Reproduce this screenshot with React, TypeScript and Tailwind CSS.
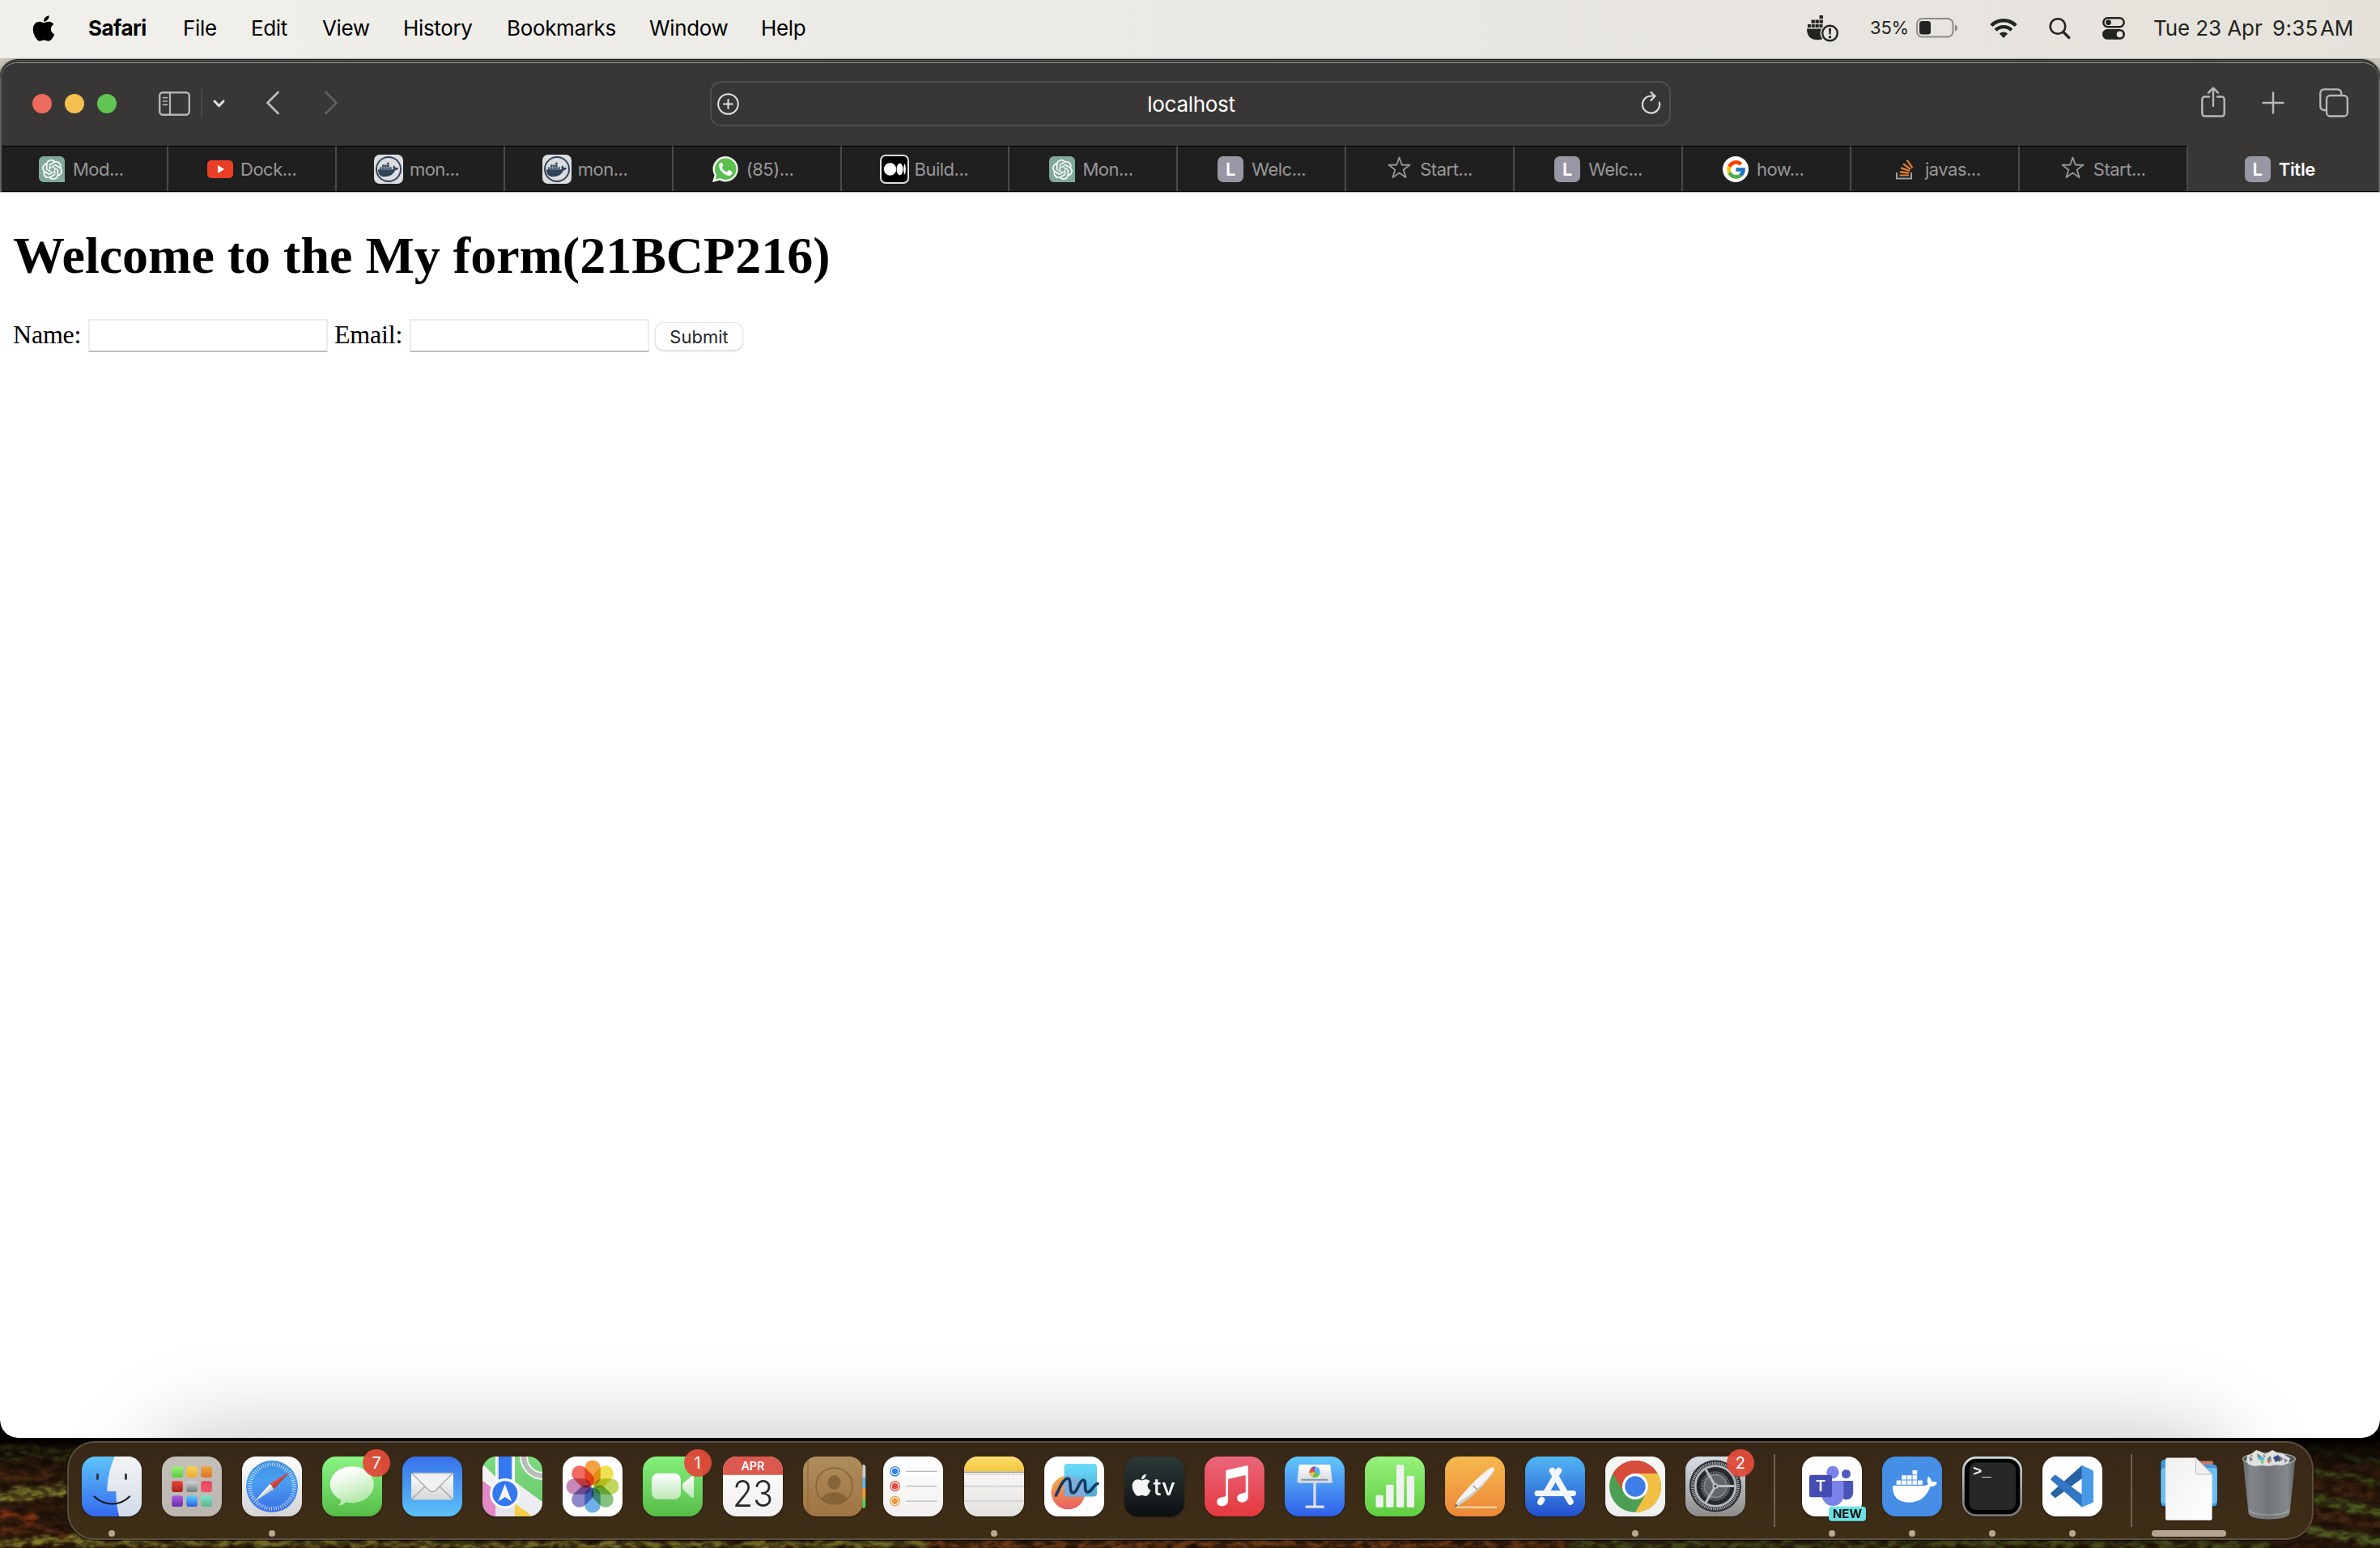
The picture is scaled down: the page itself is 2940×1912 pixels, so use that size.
import React from "react";
import { FaApple, FaDocker } from "react-icons/fa";
import { FcGoogle } from "react-icons/fc";
import { SiOpenai } from "react-icons/si";

/* ---------- Menu bar ---------- */

const menus = [
  { label: "File", cls: "w-[84px]" },
  { label: "Edit", cls: "w-[88px]" },
  { label: "View", cls: "w-[100px]" },
  { label: "History", cls: "w-[128px]" },
  { label: "Bookmarks", cls: "w-[176px]" },
  { label: "Window", cls: "w-[138px]" },
  { label: "Help", cls: "w-[60px]" },
];

function DockerStatus() {
  return (
    <svg className="h-[34px] w-[40px]" viewBox="0 0 40 34" fill="#232321">
      <path d="M15.500 1h4.500v4h-4.500zM5.500 6.500h4.300v4.200H5.500zM10.500 6.500h4.300v4.200h-4.300zM15.500 6.500h4.500v4.200h-4.500zM1 12h4v4H1zM5.800 12h4v4h-4zM10.500 12h4.300v4h-4.300zM15.500 12h4v4h-4z" />
      <path d="M0 17.500h18c-2.500 5-1.500 9.500 1.500 12.500-3 1.300-6 1.500-9 1C3.500 30.500 0 25 0 17.500z" />
      <circle cx="28.500" cy="23" r="9.300" fill="none" stroke="#232321" strokeWidth="2.400" />
      <path d="M27 17h3l-.5 7.500h-2z" />
      <circle cx="28.500" cy="27.700" r="1.700" />
    </svg>
  );
}

function Battery() {
  return (
    <svg className="h-[25px] w-[52px]" viewBox="0 0 52 25">
      <rect x="1" y="1" width="44.500" height="22.500" rx="6.500" fill="none" stroke="#8c8b87" strokeWidth="2" />
      <rect x="4" y="4" width="14" height="16.500" rx="3.500" fill="#232321" />
      <path d="M48 8.500c2 .6 3 2 3 4s-1 3.400-3 4z" fill="#8c8b87" />
    </svg>
  );
}

function Wifi() {
  return (
    <svg className="h-[26px] w-[34px]" viewBox="0 0 34 26" fill="none" stroke="#232321">
      <path d="M1.800 9.500a21.500 21.500 0 0 1 30.400 0" strokeWidth="4.400" />
      <path d="M7.200 15.200a13.900 13.900 0 0 1 19.600 0" strokeWidth="4.200" />
      <path d="M17 25l-5.200-5.400a7.300 7.300 0 0 1 10.400 0z" fill="#232321" stroke="none" />
    </svg>
  );
}

function ControlCentre() {
  return (
    <svg className="h-[28px] w-[28px]" viewBox="0 0 28 28">
      <rect x="1.300" y="1.300" width="25.400" height="11" rx="5.500" fill="none" stroke="#232321" strokeWidth="2.500" />
      <circle cx="7.500" cy="6.800" r="3.300" fill="#232321" />
      <rect x="0" y="15" width="28" height="12.800" rx="6.400" fill="#232321" />
      <circle cx="21.500" cy="21.400" r="3.800" fill="#e6e4de" />
    </svg>
  );
}

function MenuBar() {
  return (
    <header className="flex h-[72px] items-center bg-linear-to-r from-[#f1f0eb] to-[#e5e2dc] pt-[1px] pb-[4px] pl-[40px] text-[26px] whitespace-nowrap text-black">
      <FaApple className="mr-[41px] h-[36px] w-[28px]" />
      <span className="w-[117px] font-bold tracking-[-0.5px]">Safari</span>
      {menus.map((m) => (
        <span key={m.label} className={`${m.cls} tracking-[-0.35px]`}>
          {m.label}
        </span>
      ))}
      <div className="ml-auto flex items-center pr-[33px] text-[#232321]">
        <DockerStatus />
        <span className="ml-[38px] w-[57px] text-[22px] tracking-[-0.2px]">35%</span>
        <Battery />
        <span className="ml-[39px] flex">
          <Wifi />
        </span>
        <svg className="ml-[39px] h-[28px] w-[27px]" viewBox="0 0 27 28" fill="none" stroke="#232321">
          <circle cx="11" cy="11.500" r="9.300" strokeWidth="2.600" />
          <path d="M17.800 18.500l7 7" strokeWidth="3.200" strokeLinecap="round" />
        </svg>
        <span className="ml-[39px] flex">
          <ControlCentre />
        </span>
        <span className="ml-[35px] w-[147px] tracking-[-0.1px]">Tue 23 Apr</span>
        <span className="w-[59px] tracking-[0.3px]">9:35</span>
        <span className="w-[41px] tracking-[-0.3px]">AM</span>
      </div>
    </header>
  );
}

/* ---------- Safari toolbar and tabs ---------- */

function Toolbar() {
  return (
    <div className="grid h-[102px] grid-cols-[874px_1188px_1fr] items-center bg-[#393735] pb-[2px]">
      <div className="flex items-center pl-[38px]">
        <div className="flex gap-4">
          <span className="size-6 rounded-full bg-[#ed6a5f]" />
          <span className="size-6 rounded-full bg-[#f5bf4f]" />
          <span className="size-6 rounded-full bg-[#61c554]" />
        </div>
        <svg className="-mt-[1px] ml-[52px] h-[30px] w-[39px]" viewBox="0 0 39 30" fill="none" stroke="#b6b5b3">
          <rect x="1.200" y="1.200" width="36.600" height="27.600" rx="4" strokeWidth="2.400" />
          <path d="M14 1v28" strokeWidth="2.200" />
          <path d="M5.500 7.700h4.800M5.500 12h4.800M5.500 16.300h4.800" strokeWidth="1.700" strokeLinecap="round" />
        </svg>
        <span className="ml-[13px] h-[36px] w-[2px] bg-[#4a4947]" />
        <svg className="-mt-[1px] ml-[13px] h-[10px] w-[15px]" viewBox="0 0 15 10" fill="none" stroke="#e2e1e0">
          <path d="M2 2l5.500 5.700L13 2" strokeWidth="3" strokeLinecap="round" strokeLinejoin="round" />
        </svg>
        <svg className="-mt-[3px] ml-[50px] h-[30px] w-[18px]" viewBox="0 0 18 30" fill="none" stroke="#bdbcba">
          <path d="M15.500 2L2.500 15l13 13" strokeWidth="2.700" strokeLinecap="round" strokeLinejoin="round" />
        </svg>
        <svg className="-mt-[3px] ml-[54px] h-[30px] w-[18px]" viewBox="0 0 18 30" fill="none" stroke="#5f5e5c">
          <path d="M2.500 2l13 13-13 13" strokeWidth="2.700" strokeLinecap="round" strokeLinejoin="round" />
        </svg>
      </div>
      <div className="ml-[1px] flex h-[56px] items-center justify-between rounded-[14px] border-2 border-[#4f4e4c] pr-[10px] pl-[7px]">
        <svg className="size-[27px]" viewBox="0 0 27 27" fill="none" stroke="#e4e3e2" strokeLinecap="round">
          <circle cx="13.500" cy="13.500" r="12.300" strokeWidth="2" />
          <path d="M13.500 8v11M8 13.500h11" strokeWidth="2" />
        </svg>
        <span className="ml-[2px] text-[26px] tracking-[-0.3px] text-white">localhost</span>
        <svg className="-mt-[2px] h-[28px] w-[24px]" viewBox="0 0 24 28" fill="none" stroke="#dcdbda" strokeLinecap="round" strokeLinejoin="round">
          <path d="M21.800 13.500A10.600 10.600 0 1 1 11.500 5.500h4.500" strokeWidth="2.200" />
          <path d="M11.500 1l5 4.700-5 5.300" strokeWidth="2.200" />
        </svg>
      </div>
      <div className="flex items-center justify-end pr-[37px]">
        <svg className="-mt-[4px] h-[38px] w-[30px]" viewBox="0 0 30 38" fill="none" stroke="#b9b8b6" strokeWidth="2.400" strokeLinecap="round" strokeLinejoin="round">
          <path d="M10 12.500H4.500a3.200 3.200 0 0 0-3.200 3.200v17.600a3.200 3.200 0 0 0 3.200 3.200h21a3.200 3.200 0 0 0 3.200-3.200V15.700a3.200 3.200 0 0 0-3.200-3.200H20" />
          <path d="M15 24V2M9 7.700L15 1.700l6 6" />
        </svg>
        <svg className="-mt-[2px] ml-[45px] size-[28px]" viewBox="0 0 28 28" fill="none" stroke="#b9b8b6" strokeWidth="2.500" strokeLinecap="round">
          <path d="M14 1.500v25M1.500 14h25" />
        </svg>
        <svg className="-mt-[3px] ml-[43px] size-[36px]" viewBox="0 0 36 36" fill="none" stroke="#b9b8b6" strokeWidth="2.300">
          <rect x="9" y="9" width="25.800" height="25.500" rx="4.500" />
          <path d="M8.500 27H6a4.600 4.600 0 0 1-4.700-4.700V6A4.600 4.600 0 0 1 6 1.300h16.500A4.600 4.600 0 0 1 27.200 6v2.500" />
        </svg>
      </div>
    </div>
  );
}

const GptIcon = () => (
  <span className="flex size-8 items-center justify-center rounded-md rounded-br-none bg-[#82aa9c]">
    <SiOpenai className="size-[25px] text-white" />
  </span>
);

const YoutubeIcon = () => (
  <svg className="h-[22px] w-8" viewBox="0 0 32 22">
    <rect width="32" height="22" rx="5" fill="#ea3f26" />
    <path d="M13 6l8 5-8 5z" fill="#fff" />
  </svg>
);

const DockerIcon = () => (
  <span className="flex size-9 items-center justify-center rounded-[7px] bg-[#dcdddf]">
    <span className="flex size-8 items-center justify-center rounded-full border-2 border-[#2f4459] text-[#2f4459]">
      <FaDocker className="size-[25px]" />
    </span>
  </span>
);

const WhatsappIcon = () => (
  <svg className="size-8" viewBox="0 0 32 32">
    <path d="M16.300 0a15.700 15.700 0 1 1-7.300 29.700L0 32l2.500-8.600A15.700 15.700 0 0 1 16.300 0z" fill="#f4f6f3" />
    <path d="M16.300 2.600A13.200 13.200 0 1 1 9.400 27L3.700 28.500l1.600-5.400a13.200 13.200 0 0 1 11-20.500z" fill="#5bbf4e" />
    <path d="M12.400 8.700c-.4-.9-.8-.9-1.200-.9-1.300 0-3 1.500-3 4 0 3 2.200 5.800 3.600 7.500 2.200 2.600 5.500 4.600 8.500 4.600 2 0 4.300-1.500 4.300-4 0-.6 0-.8-.5-1l-3.300-1.700c-.5-.2-.8-.2-1.200.3l-1.400 1.700c-.3.3-.6.3-1 .1-2.300-1-4.200-2.800-5.300-4.900-.2-.4 0-.7.200-.9l1.200-1.600c.2-.3.200-.5.100-.8z" fill="#fff" />
  </svg>
);

const MediumIcon = () => (
  <svg className="size-9" viewBox="0 0 36 36">
    <rect x="1" y="1" width="34" height="34" rx="6" fill="#000" stroke="#dededc" strokeWidth="2" />
    <circle cx="12.500" cy="18" r="7.700" fill="#fff" />
    <ellipse cx="24.500" cy="18" rx="3.900" ry="7.300" fill="#fff" />
    <ellipse cx="30.500" cy="18" rx="1.300" ry="6.500" fill="#fff" />
  </svg>
);

const LetterIcon = () => (
  <span className="flex size-8 items-center justify-center rounded-[7px] bg-[#9898a5] text-[22px] leading-none font-semibold text-white">
    L
  </span>
);

const StarIcon = () => (
  <svg className="-mt-[4px] h-[28px] w-[29px]" viewBox="0 0 29 28" fill="none" stroke="#939393" strokeWidth="1.900" strokeLinejoin="round">
    <path d="M14.500 1.500l3.300 9.300h9.700l-7.800 5.900 2.900 9.500-8.100-5.700-8.100 5.700 2.900-9.500-7.800-5.900h9.700z" />
  </svg>
);

const StackOverflowIcon = () => (
  <svg className="h-[26px] w-[22px]" viewBox="0 0 22 26" fill="none">
    <path d="M1 17v7.500h18V17" stroke="#9a9fa4" strokeWidth="2" />
    <path d="M4.500 20.500h11.500M4.900 16.300l11.300 1.300M6.200 11.400l10.700 3.600M9.200 6.400l9 6.700M13.700 1.900l6.700 9.200" stroke="#e8812f" strokeWidth="2.200" />
  </svg>
);

const GoogleIcon = () => (
  <span className="flex size-8 items-center justify-center rounded-full bg-white">
    <FcGoogle className="size-[27px]" />
  </span>
);

const tabs = [
  { icon: <GptIcon />, text: "Mod...", pad: "pl-[46px]", gap: "w-[10px]" },
  { icon: <YoutubeIcon />, text: "Dock...", pad: "pl-[48px]", gap: "w-[9px]" },
  { icon: <DockerIcon />, text: "mon...", pad: "pl-[46px]", gap: "w-[8px]" },
  { icon: <DockerIcon />, text: "mon...", pad: "pl-[46px]", gap: "w-[8px]" },
  { icon: <WhatsappIcon />, text: "(85)...", pad: "pl-[48px]", gap: "w-[10px]" },
  { icon: <MediumIcon />, text: "Build...", pad: "pl-[47px]", gap: "w-[7px]" },
  { icon: <GptIcon />, text: "Mon...", pad: "pl-[49px]", gap: "w-[9px]" },
  { icon: <LetterIcon />, text: "Welc...", pad: "pl-[49px]", gap: "w-[10px]" },
  { icon: <StarIcon />, text: "Start...", pad: "pl-[51px]", gap: "w-[11px]" },
  { icon: <LetterIcon />, text: "Welc...", pad: "pl-[49px]", gap: "w-[10px]" },
  { icon: <GoogleIcon />, text: "how...", pad: "pl-[49px]", gap: "w-[10px]" },
  { icon: <StackOverflowIcon />, text: "javas...", pad: "pl-[55px]", gap: "w-[14px]" },
  { icon: <StarIcon />, text: "Start...", pad: "pl-[51px]", gap: "w-[11px]" },
];

function TabBar() {
  return (
    <div className="flex h-[57px] border-b border-black bg-[#393735]">
      {tabs.map((t, i) => (
        <div
          key={i}
          className={`flex ${i === 0 ? "w-[206px]" : "w-[207.9px]"} shrink-0 items-center border-t border-r-2 border-t-black border-r-[#4a4a4a] bg-[#1f1f1f] pt-[1px] text-[22px] whitespace-nowrap text-[#989898] ${t.pad}`}
        >
          {t.icon}
          <span className={t.gap} />
          <span className="tracking-[-0.5px]">{t.text}</span>
        </div>
      ))}
      <div className="flex flex-1 items-center pt-[2px] pl-[70px] text-[22px] font-semibold text-white">
        <LetterIcon />
        <span className="ml-[10px] tracking-[-0.3px]">Title</span>
      </div>
    </div>
  );
}

/* ---------- Web page ---------- */

function Page() {
  return (
    <main className="h-[1539px] rounded-b-[22px] border-t border-[#b9b9b9] bg-white pt-[41px] pl-4 font-['Liberation_Serif',serif] text-black">
      <h1 className="text-[64px] leading-[74px] font-bold whitespace-nowrap">Welcome to the My form(21BCP216)</h1>
      <form className="mt-[41px] flex items-start text-[32px] leading-[39px]" onSubmit={(e) => e.preventDefault()}>
        <label htmlFor="name" className="w-[93px] tracking-[-0.2px]">Name:</label>
        <input id="name" className="h-[41px] w-[296px] border-2 border-[#ebebeb] border-b-[#bdbdbd] bg-white" />
        <label htmlFor="email" className="ml-[8px] w-[93px] tracking-[-0.2px]">Email:</label>
        <input id="email" className="h-[41px] w-[296px] border-2 border-[#ebebeb] border-b-[#bdbdbd] bg-white" />
        <button className="mt-[5px] ml-[8px] h-[33px] w-[107px] rounded-[10px] bg-white pt-[1px] font-['Inter',sans-serif] text-[22px] leading-[32px] text-[#262626] shadow-[0_0_0_1px_#e4e4e4,0_1px_3px_rgba(0,0,0,0.35)]">
          Submit
        </button>
      </form>
    </main>
  );
}

/* ---------- Dock icons ---------- */

type Stops = [string, string];

function Tile({ id, stops, children, clip = true }: { id: string; stops: Stops; children?: React.ReactNode; clip?: boolean }) {
  return (
    <svg className="size-[74px] overflow-visible drop-shadow-[0_1px_1px_rgba(0,0,0,0.4)]" viewBox="0 0 74 74">
      <defs>
        <linearGradient id={`${id}-bg`} x1="0" y1="0" x2="0" y2="1">
          <stop offset="0" stopColor={stops[0]} />
          <stop offset="1" stopColor={stops[1]} />
        </linearGradient>
        <linearGradient id={`${id}-pale`} x1="0" y1="0" x2="0" y2="1">
          <stop offset="0" stopColor="#ffffff" />
          <stop offset="1" stopColor="#d4d6d8" />
        </linearGradient>
        <clipPath id={`${id}-clip`}>
          <rect width="74" height="74" rx="17" />
        </clipPath>
      </defs>
      <rect width="74" height="74" rx="17" fill={`url(#${id}-bg)`} />
      <g clipPath={clip ? `url(#${id}-clip)` : undefined}>{children}</g>
    </svg>
  );
}

const Finder = () => (
  <Tile id="finder" stops={["#5dc4f9", "#3569ee"]}>
    <defs>
      <linearGradient id="finder-face" x1="0" y1="0" x2="0" y2="1">
        <stop offset="0" stopColor="#f3f3f5" />
        <stop offset="1" stopColor="#d2dbe9" />
      </linearGradient>
    </defs>
    <path d="M40.700 0C35 13 31.500 28 31.300 43h11c0 11 1.500 22 4 31H74V0z" fill="url(#finder-face)" />
    <path d="M19.500 22.500v5M54.500 22.500v5" stroke="#2d3036" strokeWidth="2.800" strokeLinecap="round" />
    <path d="M15.500 49.500C28 61.500 47 61.500 59 49.500" fill="none" stroke="#17191c" strokeWidth="2.200" strokeLinecap="round" />
  </Tile>
);

const padColors: Stops[] = [
  ["#98f56e", "#5bcb42"], ["#f7d34d", "#efab3a"], ["#efa03a", "#dd7430"],
  ["#e9423a", "#a9241c"], ["#cfd8de", "#737779"], ["#ea4560", "#ec5a68"],
  ["#a95be0", "#6c2fae"], ["#5cd3fb", "#2d5be6"], ["#83e0d3", "#57b88a"],
];

const Launchpad = () => (
  <Tile id="launchpad" stops={["#c3bfb9", "#bcb6b0"]}>
    {padColors.map((c, i) => (
      <g key={i}>
        <linearGradient id={`pad-${i}`} x1="0" y1="0" x2="0" y2="1">
          <stop offset="0" stopColor={c[0]} />
          <stop offset="1" stopColor={c[1]} />
        </linearGradient>
        <rect x={12.200 + (i % 3) * 18} y={12.200 + Math.floor(i / 3) * 18} width="13.700" height="13.700" rx="3" fill={`url(#pad-${i})`} />
      </g>
    ))}
  </Tile>
);

const SafariIcon = () => (
  <Tile id="safari" stops={["#ffffff", "#d3d3d4"]}>
    <defs>
      <linearGradient id="safari-disc" x1="0" y1="0" x2="0" y2="1">
        <stop offset="0" stopColor="#3d8fe2" />
        <stop offset=".4" stopColor="#4a9ff0" />
        <stop offset="1" stopColor="#3a6ee8" />
      </linearGradient>
    </defs>
    <circle cx="37" cy="37" r="32" fill="url(#safari-disc)" />
    <circle cx="37" cy="37" r="27.300" fill="none" stroke="#e6f1fc" strokeOpacity=".85" strokeWidth="4.800" strokeDasharray="0.900 1.960" />
    <path d="M59.500 18.500L39.500 40.200l-5-6.400z" fill="#e1483c" />
    <path d="M15 55.700l19.500-21.900 5 6.400z" fill="#f3f4f4" />
    <path d="M59.500 18.500L39.500 40.200 37 37zM15 55.700L37 37l2.500 3.200z" fill="#000" fillOpacity=".15" />
  </Tile>
);

const Messages = () => (
  <Tile id="messages" stops={["#8af484", "#57bd48"]}>
    <defs>
      <linearGradient id="msg-bubble" x1="0" y1="0" x2=".4" y2="1">
        <stop offset=".2" stopColor="#ffffff" />
        <stop offset="1" stopColor="#b4e8aa" />
      </linearGradient>
    </defs>
    <path d="M36.700 12.300c15 0 27 10 27 22.500s-12 22.500-27 22.500c-2.700 0-5.200-.3-7.500-1-2.500 2.500-5.500 4-9.200 4.200 2.500-2 3.400-4.500 3.200-7-8-4-13.500-11-13.500-18.700 0-12.500 12-22.500 27-22.500z" fill="url(#msg-bubble)" />
  </Tile>
);

const Mail = () => (
  <Tile id="mail" stops={["#3770ea", "#5cc3f9"]}>
    <rect x="11" y="20" width="52" height="33.500" rx="3" fill="url(#mail-pale)" />
    <path d="M12 52.500l16-15.500M62 52.500L46 37" stroke="#9fa5a9" strokeWidth="1.200" />
    <path d="M12 21l20.500 20.500c2.800 2.700 6.200 2.700 9 0L62 21z" fill="#f1f2f2" stroke="#9ea4a8" strokeWidth="1.200" />
  </Tile>
);

const Maps = () => (
  <Tile id="maps" stops={["#7fda80", "#63c766"]}>
    <path d="M0 9l16 16v17L0 30z" fill="#f2f2f4" />
    <path d="M0 30l16 12v32H0z" fill="#e389c6" />
    <path d="M40 31l34 25v18H60L40 58z" fill="#ecedf1" />
    <path d="M40 58l22 16H40z" fill="#f6cd46" />
    <circle cx="75" cy="0" r="24" fill="none" stroke="#f4f4f4" strokeWidth="10" />
    <circle cx="75" cy="0" r="24" fill="none" stroke="#b7bcbb" strokeWidth="6" />
    <path d="M16 0h24v74H16z" fill="#e3e4ea" />
    <path d="M16 0h2v30h-2zM38 0h2v40h-2z" fill="#fff" />
    <path d="M20 0h16v36H20z" fill="#3478f0" />
    <circle cx="27.800" cy="45.700" r="18.800" fill="#f6f6f7" />
    <circle cx="27.800" cy="45.700" r="15.500" fill="#3478f0" />
    <path d="M27.800 34l8.500 21.500-8.500-5.500-8.500 5.500z" fill="#f6f6f7" />
  </Tile>
);

const petals = ["#f2952c", "#ecdc34", "#b6d245", "#72ba70", "#5ba5e4", "#7d76c2", "#bf79ae", "#ee564c"];

const Photos = () => (
  <Tile id="photos" stops={["#ffffff", "#fbfbfb"]}>
    {petals.map((c, i) => (
      <rect key={c} x="27.200" y="4.500" width="19.600" height="31" rx="9.800" fill={c} fillOpacity=".88" transform={`rotate(${i * 45} 37 37)`} className="mix-blend-multiply" />
    ))}
  </Tile>
);

const FaceTime = () => (
  <Tile id="facetime" stops={["#84f07c", "#57bc48"]}>
    <defs>
      <linearGradient id="ft-cam" x1="0" y1="0" x2="0" y2="1">
        <stop offset="0" stopColor="#fff" />
        <stop offset="1" stopColor="#bfe6b9" />
      </linearGradient>
    </defs>
    <rect x="11" y="20.700" width="36" height="32" rx="7.500" fill="url(#ft-cam)" />
    <path d="M49 36c0-2 1-3 2.500-4.500l8.500-7c2-1.500 3-.8 3 1.500v23c0 2.300-1.500 2.600-3 1.200l-8.500-8C50 41 49 39.500 49 38z" fill="url(#ft-cam)" />
  </Tile>
);

const Calendar = () => (
  <Tile id="calendar" stops={["#ffffff", "#f1f0ee"]}>
    <path d="M0 0h74v22.700H0z" fill="#dc5950" />
    <text x="37" y="17.300" textAnchor="middle" fontFamily="Inter, sans-serif" fontWeight="600" fontSize="14.500" textLength="29" fill="#fff">APR</text>
    <text x="12" y="62.300" fontFamily="Inter, sans-serif" fontWeight="300" fontSize="45" textLength="50" lengthAdjust="spacingAndGlyphs" fill="#26282a">23</text>
  </Tile>
);

const Contacts = () => (
  <Tile id="contacts" stops={["#ae8d5c", "#a07442"]} clip={false}>
    <path d="M73.500 10h1a3 3 0 0 1 2.800 3v13h-3.800z" fill="#c8cbc8" />
    <path d="M73.500 26h3.800v13h-3.800z" fill="#5fb6ef" />
    <path d="M73.500 39h3.800v13h-3.800z" fill="#ee9a3c" />
    <path d="M73.500 52h3.800v9a3 3 0 0 1-3.800 3z" fill="#5ccb5f" />
    <path d="M6 4.500v65" stroke="#8f6c3c" strokeWidth="1.200" />
    <circle cx="38.500" cy="36.500" r="22.500" fill="none" stroke="#85643a" strokeWidth="1.600" />
    <ellipse cx="38.500" cy="32" rx="8" ry="9" fill="#85643a" />
    <path d="M22.500 52.500c3-5.500 9-8.500 16-8.500s13 3 16 8.500c-4 4.500-9.500 6.500-16 6.500s-12-2-16-6.500z" fill="#85643a" />
  </Tile>
);

const Reminders = () => (
  <Tile id="reminders" stops={["#ffffff", "#f1f0ee"]}>
    {["#3b82f0", "#e2483c", "#ec953a"].map((c, i) => (
      <g key={c}>
        <circle cx="14.500" cy={18.300 + i * 18.400} r="5.700" fill="#fff" stroke={c} strokeWidth="1.300" />
        <circle cx="14.500" cy={18.300 + i * 18.400} r="3.800" fill={c} />
        <path d={`M28 ${18.300 + i * 18.400}h38.500`} stroke="#b9b9bb" strokeWidth="1.200" />
      </g>
    ))}
  </Tile>
);

const Notes = () => (
  <Tile id="notes" stops={["#ffffff", "#e3e1de"]}>
    <defs>
      <linearGradient id="notes-top" x1="0" y1="0" x2="0" y2="1">
        <stop offset="0" stopColor="#fadd70" />
        <stop offset="1" stopColor="#f5c739" />
      </linearGradient>
    </defs>
    <path d="M0 0h74v18.300H0z" fill="url(#notes-top)" />
    <path d="M0 19.200h74" stroke="#9a9790" strokeWidth="1.600" />
    <path d="M2 22h72" stroke="#b5b2ad" strokeWidth="1.300" strokeDasharray="1.300 1.300" />
    <path d="M0 36.700h74M0 55h74" stroke="#cfced3" strokeWidth="1.400" />
  </Tile>
);

const Freeform = () => (
  <Tile id="freeform" stops={["#ffffff", "#ffffff"]}>
    <defs>
      <linearGradient id="ff-blue" x1="0" y1="0" x2="0" y2="1">
        <stop offset="0" stopColor="#69ddfa" />
        <stop offset="1" stopColor="#4fa9da" />
      </linearGradient>
      <linearGradient id="ff-orange" x1="0" y1="0" x2="0" y2="1">
        <stop offset="0" stopColor="#f2b440" />
        <stop offset="1" stopColor="#ec5d66" />
      </linearGradient>
    </defs>
    <circle cx="29.500" cy="44.300" r="21" fill="url(#ff-orange)" />
    <rect x="24.500" y="9" width="40.500" height="40.500" rx="4" fill="url(#ff-blue)" />
    <path d="M24.500 24a21 21 0 0 1 25.800 25.500H28.500a4 4 0 0 1-4-4z" fill="#8ba9d8" fillOpacity=".75" />
    <path d="M14.500 48C19 38 24 27 29 27s1 18 6.500 18S43 29 48 29s0 15 5.500 15S60 35 66 33.500" fill="none" stroke="#143a60" strokeWidth="3.600" strokeLinecap="round" />
  </Tile>
);

const AppleTv = () => (
  <Tile id="tv" stops={["#2c3a38", "#0d0f12"]}>
    <g transform="translate(5.500 19.800)">
      <FaApple size={31} color="#f4f5f5" />
    </g>
    <text x="35.500" y="48" fontFamily="Inter, sans-serif" fontWeight="500" fontSize="29" textLength="27.500" lengthAdjust="spacingAndGlyphs" fill="#f4f5f5">tv</text>
  </Tile>
);

const Music = () => (
  <Tile id="music" stops={["#ea667b", "#e4383e"]}>
    <path d="M26.300 18.500c0-1 .6-1.600 1.600-1.800L52 11.300c1.200-.3 1.800.2 1.800 1.400v37.500c0 3.500-3.500 6.300-7.200 6.300-3.600 0-6.400-2-6.400-5.300 0-3 2.300-5 5.800-5.700l3.300-.7c1.200-.3 1.500-.8 1.500-1.800V24.500c0-1-.5-1.400-1.500-1.200L30.500 27.500c-1 .2-1.400.7-1.400 1.700v25.500c0 3.800-3.500 6.500-7.300 6.500-3.600 0-6.500-2-6.500-5.300 0-3 2.300-5 5.800-5.700l3.700-.8c1.200-.3 1.500-.8 1.500-1.800z" fill="#fff" />
  </Tile>
);

const Keynote = () => (
  <Tile id="keynote" stops={["#62c8fb", "#2f5ee8"]}>
    <path d="M35.300 32h3.400v29h-3.400z" fill="#d8dce2" />
    <path d="M19.500 10h35c1.200 0 1.900.7 2 1.800l2.300 19c.1 1.200-.6 2-1.800 2H17.200c-1.200 0-1.900-.8-1.800-2l2.100-19c.1-1.100.8-1.800 2-1.800z" fill="url(#keynote-pale)" />
    <path d="M20.500 28.800h33" stroke="#7d97ae" strokeWidth="2" />
    <circle cx="37.200" cy="19" r="6.800" fill="#5cb8ef" />
    <path d="M37.200 19l5.800 3.500a6.800 6.800 0 0 1-8.500 2.800z" fill="#6cc04a" />
    <path d="M37.200 19l-2.700 6.300a6.800 6.800 0 0 1-4-5z" fill="#f5c93b" />
    <path d="M37.200 19l-6.700 1.300a6.800 6.800 0 0 1 2-6z" fill="#e9593b" />
    <path d="M37.200 19l-4.700-4.700a6.800 6.800 0 0 1 4.700-2z" fill="#a64b9c" />
    <rect x="25.500" y="60.500" width="23.500" height="3.300" rx="1.200" fill="#dde1e8" />
  </Tile>
);

const Numbers = () => (
  <Tile id="numbers" stops={["#97f27c", "#5fce40"]}>
    <g fill="#f0f2f1">
      <rect x="13.500" y="47.700" width="9.300" height="15" rx="1.500" />
      <rect x="26.200" y="34.700" width="9.300" height="28" rx="1.500" />
      <rect x="39" y="10.300" width="9.300" height="52.400" rx="1.500" />
      <rect x="51.800" y="24" width="9.300" height="38.700" rx="1.500" />
    </g>
  </Tile>
);

const Pages = () => (
  <Tile id="pages" stops={["#f6b94f", "#ec8737"]}>
    <path d="M15 62.700h48" stroke="#f8cf98" strokeWidth="2.400" strokeLinecap="round" />
    <path d="M12 62.500l3.500-8.500C28 38 44 22 56.500 14c3-1.700 5.500.3 4 3.300C53 31 36.500 48 19 59z" fill="#f4f4f4" />
    <path d="M12 62.500l7-3.500C36.500 48 53 31 60.500 17.300 48 34 34 46 16 57z" fill="#cfcdca" />
    <path d="M34.500 36l5 4.500" stroke="#8d8a86" strokeWidth="1.200" />
    <path d="M12 62.500l1.500-3.700 2.200 2z" fill="#4a4745" />
  </Tile>
);

const AppStore = () => (
  <Tile id="appstore" stops={["#51b6f2", "#2350cf"]}>
    <g stroke="#f2f6fb" strokeWidth="7.500" strokeLinecap="round">
      <path d="M33.500 17.500L56 56" />
      <path d="M15 45.500h44.500" strokeWidth="6.800" />
      <path d="M41.500 17.500L26.500 43.500" />
      <path d="M20.500 53.500l-1.700 2.900" />
    </g>
  </Tile>
);

const Chrome = () => (
  <Tile id="chrome" stops={["#f7f7f6", "#efefee"]}>
    <circle cx="37" cy="37" r="32" fill="#4c9f52" />
    <path d="M9.300 21A32 32 0 0 1 64.700 21H37A16 16 0 0 0 23.100 45z" fill="#d84c3c" />
    <path d="M64.700 21A32 32 0 0 1 37 69l13.900-24A16 16 0 0 0 50.900 29L48 21z" fill="#f2bf42" />
    <path d="M37 21h27.700L60 30H40z" fill="#f2bf42" />
    <circle cx="37" cy="37" r="16" fill="#fff" />
    <circle cx="37" cy="37" r="12.700" fill="#3e7de8" />
  </Tile>
);

const Settings = () => (
  <Tile id="settings" stops={["#d6dfe6", "#8d8b89"]}>
    <circle cx="37" cy="36.500" r="32" fill="#26292b" />
    <circle cx="37" cy="36.500" r="28.300" fill="none" stroke="#a7abae" strokeWidth="3.600" strokeDasharray="1.250 1.050" />
    <circle cx="37" cy="36.500" r="24.800" fill="none" stroke="#b4b8bb" strokeWidth="2.800" />
    <circle cx="37" cy="36.500" r="16.500" fill="none" stroke="#75797c" strokeWidth="3.600" strokeDasharray="1.100 .9" />
    <circle cx="37" cy="36.500" r="14" fill="#636669" stroke="#8b8e91" strokeWidth="1.500" />
    <path d="M37 36.500h24M37 36.500L25 15.700M37 36.500L25 57.300" stroke="#b9bdc0" strokeWidth="3" />
    <circle cx="37" cy="36.500" r="3.600" fill="#b9bdc0" />
    <circle cx="37" cy="36.500" r="1.500" fill="#33363a" />
  </Tile>
);

const Teams = () => (
  <Tile id="teams" stops={["#ffffff", "#fdfdfd"]} clip={false}>
    <circle cx="54.500" cy="21.500" r="5.500" fill="#5059c0" />
    <path d="M49 30h12.500c1 0 1.700.7 1.700 1.700V44c0 5.500-3.300 9.300-8 9.300S49 50 49 45z" fill="#4b54bb" />
    <circle cx="38" cy="19.500" r="7.700" fill="#7b83eb" />
    <path d="M24.500 30h25c1.100 0 2 .9 2 2v15c0 8-5.500 14-13.300 14S24.500 55 24.500 47z" fill="#7b83eb" />
    <rect x="9" y="22.700" width="28" height="27.500" rx="2.500" fill="#454db3" />
    <text x="23" y="43" textAnchor="middle" fontFamily="Inter, sans-serif" fontWeight="600" fontSize="19" fill="#fff">T</text>
    <rect x="33" y="61.700" width="46" height="18" rx="4" fill="#6be0e4" />
    <text x="56" y="76" textAnchor="middle" fontFamily="Inter, sans-serif" fontWeight="700" fontSize="15" textLength="36" fill="#0d1414">NEW</text>
  </Tile>
);

const DockerApp = () => (
  <Tile id="dockerapp" stops={["#468fe7", "#458de5"]}>
    <g fill="#fff">
      {[0, 1, 2, 3, 4].map((i) => (
        <rect key={i} x={17.700 + i * 6.600} y="29.500" width="5.700" height="5.300" />
      ))}
      {[1, 2, 3].map((i) => (
        <rect key={i} x={17.700 + i * 6.600} y="23.200" width="5.700" height="5.300" />
      ))}
      <rect x="37.500" y="17" width="5.700" height="5.300" />
      <path d="M13 36h39c2.500 0 4-.8 4.800-2-1.500-3-1.300-6.500.2-9.200 2.500 1.500 4 4 4 6.500 2.500-.6 5-.2 7 1.200-1.500 3.500-4.500 4.800-8.500 4.700C55.500 49 46.500 56.700 33 56.700 19.500 56.700 13 49 13 38z" />
    </g>
  </Tile>
);

const Terminal = () => (
  <Tile id="terminal" stops={["#cfe0e4", "#737373"]}>
    <rect x="2.700" y="2.700" width="68.600" height="68.600" rx="14.500" fill="#020202" />
    <rect x="8.600" y="7.500" width="57.400" height="58.500" rx="8.500" fill="#272727" />
    <text x="13" y="24" fontFamily="Liberation Mono, monospace" fontWeight="700" fontSize="19" fill="#f2f2f2">&gt;_</text>
  </Tile>
);

const VsCode = () => (
  <Tile id="vscode" stops={["#ffffff", "#ffffff"]}>
    <path d="M49 10.700V27L17 50.500c-.8.600-1.700.5-2.400 0l-3.700-3.400c-.8-.7-.8-1.800 0-2.500z" fill="#2863a6" />
    <path d="M49 62.700V47L17 23.300c-.8-.6-1.700-.5-2.400 0l-3.700 3.400c-.8.7-.8 1.800 0 2.500z" fill="#3376c3" />
    <path d="M48.500 10.700l13 6c1 .5 1.500 1.200 1.500 2.300v36c0 1-.5 1.800-1.500 2.300l-13 5.500z" fill="#479ae8" />
  </Tile>
);

const Downloads = () => (
  <svg className="size-[74px] overflow-visible drop-shadow-[0_1px_1px_rgba(0,0,0,0.4)]" viewBox="0 0 74 74">
    <defs>
      <linearGradient id="dl-doc" x1="0" y1="0" x2="1" y2="1">
        <stop offset="0" stopColor="#f0f0f0" />
        <stop offset="1" stopColor="#ffffff" />
      </linearGradient>
    </defs>
    <rect x="48" y="5.500" width="19" height="12" rx="2" fill="#c9796a" />
    <path d="M2.400 8c0-2.500 1.500-4 4-4h12v6h49c2.800 0 4.400 1.500 4.400 4v43c0 3-1.500 4.500-4.500 4.500H7c-3 0-4.600-1.500-4.600-4.500z" fill="#3f9bdb" />
    <rect x="2.400" y="14" width="69.400" height="44" rx="4" fill="#6dbef2" />
    <path d="M10 1.500h35.500L65.600 22v54.800a2 2 0 0 1-2 2H10a2 2 0 0 1-2-2V3.500a2 2 0 0 1 2-2z" fill="url(#dl-doc)" />
    <path d="M45.500 1.500L65.600 22H48a2.500 2.500 0 0 1-2.500-2.500z" fill="#f1f1f1" stroke="#b9b9b9" strokeWidth="1" />
  </svg>
);

const Trash = () => (
  <svg className="size-[74px] overflow-visible" viewBox="0 0 74 74">
    <defs>
      <linearGradient id="bin" x1="0" y1="0" x2="1" y2="0">
        <stop offset="0" stopColor="#64686b" />
        <stop offset=".15" stopColor="#82868a" />
        <stop offset=".5" stopColor="#717578" />
        <stop offset=".85" stopColor="#85898c" />
        <stop offset="1" stopColor="#5f6366" />
      </linearGradient>
    </defs>
    <path d="M4.500 2h65L62.500 70c-.5 4.500-11 7.500-25.500 7.500S12 74.500 11.500 70z" fill="url(#bin)" />
    <ellipse cx="37" cy="3" rx="32.500" ry="7.500" fill="#55595c" stroke="#a9adb0" strokeWidth="1.200" />
    <path d="M9 6l1-7 6-3 5-4 6 2 5 3 4-2 5-3 6 3 7 1 5 4 4 2-2 6-7 3-9-1-8 2-9-1-9 1-7-2z" fill="#dfe0e0" />
    <path d="M12 0l5 3-3 4zM22-4l6 4-5 2zM48-2l7 5-6 4zM34 3l5-4 1 8zM14-3l3 2-2 2zM56 2l4 3-4 3zM30-3l3 3-3 1z" fill="#7d8183" />
    <path d="M22 2l6-2 4 3-5 2z" fill="#4fb4df" />
    <path d="M26 6l5-2-2 6z" fill="#7cc35a" />
    <path d="M42 1l6-3 3 6-6 3z" fill="#3d4a86" />
    <path d="M34 6l3-2 1 5z" fill="#c8503c" />
    <path d="M11.800 66c3 3.700 12 6 25.200 6s22.200-2.300 25.200-6" fill="none" stroke="#b6babd" strokeOpacity=".6" strokeWidth="1.200" />
  </svg>
);

/* ---------- Dock ---------- */

const apps: { icon: React.ReactNode; dot?: boolean; badge?: string }[] = [
  { icon: <Finder />, dot: true },
  { icon: <Launchpad /> },
  { icon: <SafariIcon />, dot: true },
  { icon: <Messages />, badge: "7" },
  { icon: <Mail /> },
  { icon: <Maps /> },
  { icon: <Photos /> },
  { icon: <FaceTime />, badge: "1" },
  { icon: <Calendar /> },
  { icon: <Contacts /> },
  { icon: <Reminders /> },
  { icon: <Notes />, dot: true },
  { icon: <Freeform /> },
  { icon: <AppleTv /> },
  { icon: <Music /> },
  { icon: <Keynote /> },
  { icon: <Numbers /> },
  { icon: <Pages /> },
  { icon: <AppStore /> },
  { icon: <Chrome />, dot: true },
  { icon: <Settings />, badge: "2" },
];

const running = [<Teams key="t" />, <DockerApp key="d" />, <Terminal key="c" />, <VsCode key="v" />];

function Slot({ icon, dot, badge, bar }: { icon: React.ReactNode; dot?: boolean; badge?: string; bar?: boolean }) {
  return (
    <div className="relative flex w-[99.1px] shrink-0 flex-col items-center pt-[17px]">
      {icon}
      {badge && (
        <span className="absolute top-[8px] left-[63px] flex size-[34px] items-center justify-center rounded-full bg-[#e14b3a]/95 text-[20px] leading-none text-white">
          {badge}
        </span>
      )}
      {dot && <span className="absolute bottom-[2px] size-2 rounded-full bg-[#b8a893]" />}
      {bar && <span className="absolute bottom-[2px] h-2 w-[92px] rounded-full bg-[#b3a591]" />}
    </div>
  );
}

function Separator() {
  return (
    <div className="flex w-[44.500px] shrink-0 justify-center pt-[14px]">
      <span className="ml-[1px] h-[90px] w-[2px] bg-[#6f634f]" />
    </div>
  );
}

function Dock() {
  return (
    <nav className="relative mt-1 ml-[83px] flex h-[122px] w-[2775px] rounded-[34px] border-2 border-[#5a4f3d] bg-linear-to-b from-[#372717] to-[#3f2e16] pl-[3px] shadow-[0_0_0_1px_rgba(0,0,0,0.5)]">
      {apps.map((a, i) => (
        <Slot key={i} {...a} />
      ))}
      <Separator />
      {running.map((icon, i) => (
        <Slot key={i} icon={icon} dot />
      ))}
      <Separator />
      <Slot icon={<Downloads />} bar />
      <Slot icon={<Trash />} />
    </nav>
  );
}

/* ---------- Vineyard wallpaper ---------- */

function Wallpaper() {
  return (
    <svg className="absolute inset-x-0 bottom-0 h-[160px] w-[2940px]" viewBox="0 0 2940 160" preserveAspectRatio="none">
      <defs>
        <filter id="soften" x="-5%" y="-20%" width="110%" height="140%" colorInterpolationFilters="sRGB">
          <feTurbulence type="fractalNoise" baseFrequency="0.06 0.1" numOctaves="3" seed="4" result="noise" />
          <feDisplacementMap in="SourceGraphic" in2="noise" scale="16" xChannelSelector="R" yChannelSelector="G" />
          <feGaussianBlur stdDeviation="1.500" />
        </filter>
        <filter id="grain" x="0" y="0" width="100%" height="100%" colorInterpolationFilters="sRGB">
          <feTurbulence type="fractalNoise" baseFrequency="0.06 0.14" numOctaves="4" seed="9" />
          <feColorMatrix values="0 0 0 0 0.06  0 0 0 0 0.03  0 0 0 0 0.01  3.600 0 0 0 -1.350" />
        </filter>
        <linearGradient id="top-shade" x1="0" y1="0" x2="0" y2="1">
          <stop offset=".15" stopColor="#000" stopOpacity=".95" />
          <stop offset=".4" stopColor="#000" stopOpacity="0" />
        </linearGradient>
      </defs>
      <rect width="2940" height="160" fill="#2e1b0d" />
      <g filter="url(#soften)" fill="none" strokeLinecap="round">
        <path d="M-10 37c25-6 60 8 110 0" stroke="#6f6a26" strokeWidth="8" />
        <path d="M-10 52c25-8 60-2 110-6" stroke="#544c1d" strokeWidth="4" />
        <path d="M-10 70c25 4 60-2 110 2" stroke="#40260f" strokeWidth="9" />
        <path d="M-10 104c30-12 60-8 110-18" stroke="#8c8430" strokeWidth="12" />
        <path d="M-10 92c30 0 50-8 110-6" stroke="#605a22" strokeWidth="5" />
        <path d="M-10 124c14-10 34-4 50 2" stroke="#7a3014" strokeWidth="13" />
        <path d="M-10 140c30-4 60-6 90 4" stroke="#572b11" strokeWidth="7" />
        <path d="M-10 158c30-8 60-4 120-10" stroke="#847b2c" strokeWidth="8" />
        <path d="M100 155c200-5 400 4 1050 0" stroke="#716a26" strokeWidth="8" />
        <path d="M1150 156h650" stroke="#6a3a18" strokeWidth="8" />
        <path d="M1800 155c60 0 80 0 140 1" stroke="#5e3414" strokeWidth="8" />
        <path d="M1940 155c200 4 560-4 860 2" stroke="#44491c" strokeWidth="8" />
        <path d="M2850 38c30 6 60 8 100 18" stroke="#2e3714" strokeWidth="7" />
        <path d="M2850 64c30 5 60 10 100 16" stroke="#3b4818" strokeWidth="7" />
        <path d="M2850 80c30 5 60 10 100 16" stroke="#3f2410" strokeWidth="8" />
        <path d="M2850 98c30 5 60 14 100 20" stroke="#4a551d" strokeWidth="10" />
        <path d="M2850 116c30 5 60 12 100 18" stroke="#432611" strokeWidth="8" />
        <path d="M2850 138c30 5 60 10 100 14" stroke="#4e5a22" strokeWidth="9" />
      </g>
      <rect width="2940" height="160" filter="url(#grain)" opacity=".55" />
      <rect width="2940" height="160" fill="url(#top-shade)" />
    </svg>
  );
}

export default function App() {
  return (
    <div className="relative h-[1912px] w-[2940px] overflow-hidden bg-[#c9c5bb] font-['Inter',sans-serif]">
      <Wallpaper />
      <div className="relative">
        <MenuBar />
        <section className="relative mt-1 h-[1700px] rounded-[22px] bg-black shadow-[0_-1px_0_0_#000,0_-2px_0_0_#6b6a69,0_-3px_0_0_#161616,0_2px_6px_1px_#000]">
          <div className="rounded-t-[22px] border-x-2 border-t-2 border-x-[#5f5e5d] border-t-[#7b7979] [&>*:first-child]:rounded-t-[20px]">
            <Toolbar />
            <TabBar />
          </div>
          <div className="relative overflow-hidden rounded-b-[22px]">
            <Page />
            <div className="pointer-events-none absolute top-[1551px] left-[200px] h-[120px] w-[2540px] rounded-[50px] shadow-[0_0_110px_14px_rgba(0,0,0,0.25)]" />
          </div>
        </section>
        <Dock />
      </div>
    </div>
  );
}
